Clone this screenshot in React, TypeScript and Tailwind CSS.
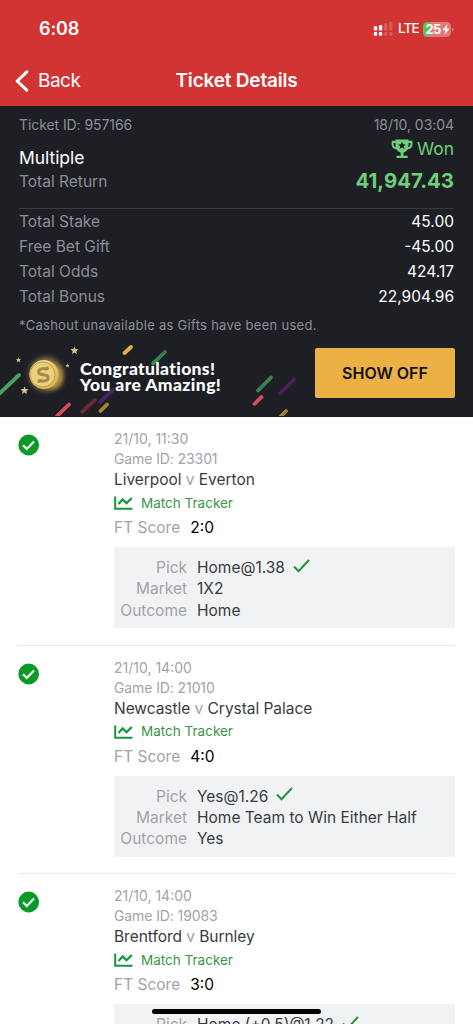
import React from "react";

type Match = {
  date: string;
  gameId: string;
  home: string;
  away: string;
  score: string;
  pick: string;
  market: string;
  outcome: string;
};

const totals = [
  ["Total Stake", "45.00"],
  ["Free Bet Gift", "-45.00"],
  ["Total Odds", "424.17"],
  ["Total Bonus", "22,904.96"],
];

const matches: Match[] = [
  { date: "21/10, 11:30", gameId: "23301", home: "Liverpool", away: "Everton", score: "2:0", pick: "Home@1.38", market: "1X2", outcome: "Home" },
  { date: "21/10, 14:00", gameId: "21010", home: "Newcastle", away: "Crystal Palace", score: "4:0", pick: "Yes@1.26", market: "Home Team to Win Either Half", outcome: "Yes" },
  { date: "21/10, 14:00", gameId: "19083", home: "Brentford", away: "Burnley", score: "3:0", pick: "Home (+0.5)@1.22", market: "", outcome: "" },
];

function StatusBar() {
  return (
    <div className="flex h-[58px] items-center justify-between pl-[39px] pr-[19px] text-white">
      <span className="text-[18px] font-semibold leading-none tracking-[-0.1px]">6:08</span>
      <div className="flex items-center">
        <svg width="20" height="14" viewBox="0 0 20 14" fill="#fff">
          <rect x="0.8" y="4.2" width="3.4" height="4.2" rx="1" />
          <rect x="5.9" y="3" width="3.4" height="5.4" rx="1" />
          <rect x="0.8" y="10" width="3.4" height="3.8" rx="1" />
          <rect x="5.9" y="10" width="3.4" height="3.8" rx="1" />
          <g opacity="0.18">
            <rect x="11" y="1.2" width="3.4" height="7.2" rx="1" />
            <rect x="16.1" y="0" width="3.4" height="8.4" rx="1" />
            <rect x="11" y="10" width="3.4" height="3.8" rx="1" />
            <rect x="16.1" y="10" width="3.4" height="3.8" rx="1" />
          </g>
        </svg>
        <span className="ml-[5px] w-[20px] text-[13.5px] font-medium leading-none tracking-[-0.8px]">LTE</span>
        <div className="ml-[5px] flex h-[15px] w-[28px] items-center overflow-hidden rounded-[4.5px] bg-[linear-gradient(90deg,#5cc45f_0_7px,#e07b7c_7px)] pl-[2.5px]">
          <span className="text-[13px] font-bold leading-none tracking-[-0.6px]">25</span>
          <svg className="ml-[1px]" width="8" height="11" viewBox="0 0 8 11" fill="#fff">
            <path d="M5.4 0.3 0.5 6.1h2.900L2.500 10.700l5-6H4.500z" />
          </svg>
        </div>
        <svg className="ml-[1px]" width="2" height="5" viewBox="0 0 2 5" fill="#e07b7c">
          <path d="M0 0.5Q2 1.5 2 2.5T0 4.5z" />
        </svg>
      </div>
    </div>
  );
}

function NavBar() {
  return (
    <div className="grid h-[48px] grid-cols-[1fr_auto_1fr] items-center pl-[15px] pb-[3px] text-white">
      <div className="flex items-center">
        <svg width="15" height="22" viewBox="0 0 15 22" fill="none" stroke="#fff" strokeWidth="3" strokeLinecap="round" strokeLinejoin="round">
          <path d="M11.8 1.8 2.2 11.1 11.8 20.2" />
        </svg>
        <span className="ml-[8px] text-[19px] leading-none tracking-[-0.5px]">Back</span>
      </div>
      <span className="mr-[15px] text-[19px] font-semibold leading-none tracking-[-0.2px]">Ticket Details</span>
      <span />
    </div>
  );
}

function Trophy() {
  return (
    <svg width="22" height="20" viewBox="0 0 22 20">
      <path fill="#6fce79" fillRule="evenodd" d="M4.500 .5h13v1.300h4v3.700c0 3-2 4.800-5 5-.9 1.500-2.200 2.600-4 3v3.300h4.200v2.200H5.500v-2.200h4.200v-3.300c-1.800-.4-3.100-1.500-4-3-3-.2-5-2-5-5V1.800h3.800zM2.600 3.900v1.600c0 1.500.8 2.400 2.200 2.700C4.500 7 4.500 5.400 4.500 3.900zm14.900 0c0 1.500 0 3.100-.3 4.300 1.400-.3 2.200-1.200 2.200-2.700V3.900z" />
      <path fill="#1e1f25" d="m11 2.700 1.150 2.450 2.700.3-2 1.800.55 2.650L11 8.600 8.600 9.900l.55-2.650-2-1.800 2.700-.3z" />
    </svg>
  );
}

function Confetti() {
  return (
    <svg className="absolute left-0 top-0" width="473" height="81" viewBox="0 0 473 81">
      <defs>
        <linearGradient id="coin" x1="0" y1="0" x2="0.8" y2="1">
          <stop offset="0" stopColor="#f6e49a" />
          <stop offset="1" stopColor="#d7b04d" />
        </linearGradient>
        <linearGradient id="leaf" x1="0" y1="1" x2="1" y2="0">
          <stop offset="0" stopColor="#2f9c50" />
          <stop offset="1" stopColor="#397748" />
        </linearGradient>
        <filter id="glow" x="-40%" y="-40%" width="180%" height="180%">
          <feGaussianBlur stdDeviation="2.5" />
        </filter>
      </defs>
      <g strokeWidth="3.800" strokeLinecap="round" fill="none">
        <path stroke="#46a35d" d="M-2 60 19 40" />
        <path stroke="#e3b23a" d="m124.500 18 6.500-6" />
        <path stroke="url(#leaf)" d="m153 28.500 12-11.500" />
        <path stroke="#dc4a5b" d="m57 81 12-11.500" />
        <path stroke="#672a36" d="m82 77 13-12" />
        <path stroke="#4d2163" d="m100 67 13-12" />
        <path stroke="#a78634" d="m100.500 76 6.500-6.500" />
        <path stroke="#39864d" d="m258 55.500 13-13" />
        <path stroke="#4a205b" d="m280 58.500 14-14" />
        <path stroke="#df4b5d" d="m254.500 69 7-7" />
        <path stroke="#9f8535" d="m281 81 5-5" />
      </g>
      <circle cx="46" cy="39" r="17" fill="#c6a24e" opacity="0.6" filter="url(#glow)" />
      <ellipse cx="53" cy="42" rx="10" ry="12" fill="#cda84d" opacity="0.7" filter="url(#glow)" />
      <circle cx="44" cy="39.500" r="14.500" fill="url(#coin)" />
      <circle cx="42.500" cy="39.500" r="12.500" fill="#ead07c" stroke="#b99445" strokeWidth="0.900" />
      <g transform="rotate(-8 43 40)">
        <path d="M47.500 35.500c-1.500-2.800-8.800-2.200-8.500 1.300.3 4 8.700 2.200 8.700 6.400 0 3.500-6.200 3.900-8.700 1.300" fill="none" stroke="#a9894a" strokeWidth="3" />
        <circle cx="48" cy="34" r="1.900" fill="#a9894a" />
        <circle cx="38.500" cy="45.500" r="1.900" fill="#a9894a" />
      </g>
      <g fill="#d9c18b">
        <path d="m74.500 11.500 1.100 2.600 2.900.2-2.200 1.900.7 2.800-2.500-1.500-2.500 1.500.7-2.800-2.200-1.900 2.900-.2z" />
        <path d="m24.500 51.500 1.100 2.600 2.900.2-2.200 1.900.7 2.800-2.500-1.500-2.500 1.500.7-2.800-2.200-1.900 2.900-.2z" />
        <path d="m18.500 22.500 .7 1.600 1.800.2-1.300 1.200.4 1.700-1.600-.9-1.600.9.400-1.700-1.300-1.200 1.800-.2z" />
        <path d="m67.500 28.500 .6 1.400 1.500.2-1.100 1 .3 1.500-1.300-.8-1.300.8.3-1.500-1.100-1 1.500-.2z" />
      </g>
    </svg>
  );
}

function Summary() {
  return (
    <section className="h-[311px] bg-[#1e1f25] pt-[9px] text-[#8c8e96]">
      <div className="mx-[19px] flex h-[94px] justify-between border-b border-[#3b3c42]">
        <div className="flex flex-col">
          <span className="h-[20px] text-[14px] leading-[20px] tracking-[-0.08px]">Ticket ID: 957166</span>
          <span className="mt-[11px] h-[24px] text-[17.5px] leading-[24px] tracking-[-0.05px] text-white">Multiple</span>
          <span className="text-[15.5px] leading-[24px]">Total Return</span>
        </div>
        <div className="flex flex-col items-end">
          <span className="h-[20px] text-[14px] leading-[20px] tracking-[-0.05px]">18/10, 03:04</span>
          <div className="mt-[2px] flex h-[24px] items-center gap-[4px] text-[17.4px] leading-[24px] text-[#6fce79]">
            <Trophy />
            <span>Won</span>
          </div>
          <span className="mt-[8px] text-[20.4px] font-bold leading-[24px] text-[#6fce79]">41,947.43</span>
        </div>
      </div>
      <div className="mx-[19px] flex flex-col text-[15.5px] leading-[25px]">
        {totals.map(([label, value]) => (
          <div key={label} className="flex justify-between">
            <span>{label}</span>
            <span className="text-white">{value}</span>
          </div>
        ))}
        <span className="mt-[6px] text-[13px] leading-[20px] tracking-[0.28px]">*Cashout unavailable as Gifts have been used.</span>
      </div>
      <div className="relative h-[81px] overflow-hidden">
        <Confetti />
        <div className="relative flex items-start justify-between pl-[80px] pr-[18px] pt-[13px]">
          <div className="mt-[13px] flex flex-col font-['Lato',sans-serif] text-[17.5px] font-black leading-[16px] text-white [font-variant-ligatures:none]">
            <span className="tracking-[0.35px]">Congratulations!</span>
            <span className="tracking-[0.4px]">You are Amazing!</span>
          </div>
          <button className="h-[50px] w-[140px] rounded-[2px] bg-[#edb044] text-[16px] font-semibold text-[#111]">SHOW OFF</button>
        </div>
      </div>
    </section>
  );
}

function Detail({ label, value, checked }: { label: string; value: string; checked?: boolean }) {
  return (
    <div className="flex h-[21.25px] items-center whitespace-nowrap text-[15.5px]">
      <span className="w-[73px] text-right text-[#a1a3aa]">{label}</span>
      <span className="ml-[10px] text-[#393b43]">{value}</span>
      {checked && (
        <svg className="mb-[4px] ml-[8px]" width="17" height="14" viewBox="0 0 17 14" fill="none" stroke="#20953c" strokeWidth="2">
          <path d="m1 7.500 4.500 4.700L16 1" />
        </svg>
      )}
    </div>
  );
}

function MatchCard({ match }: { match: Match }) {
  return (
    <article className="mx-[18px] flex h-[228.5px] shrink-0 border-b border-[#e7e8ea] pt-[12px]">
      <svg className="mt-[5px] shrink-0" width="22" height="22" viewBox="0 0 22 22">
        <circle cx="10.700" cy="11" r="10.400" fill="#0b9a28" />
        <path d="m5 11.200 3.800 3.800 7.200-7.400" fill="none" stroke="#fff" strokeWidth="2.200" />
      </svg>
      <div className="ml-[74px] flex w-[341px] flex-col">
        <span className="h-[20px] text-[14px] leading-[20px] text-[#a1a3aa]">{match.date}</span>
        <span className="h-[20px] text-[14px] leading-[20px] tracking-[-0.1px] text-[#a1a3aa]">Game ID: {match.gameId}</span>
        <span className="h-[20px] text-[15.5px] leading-[22px] tracking-[-0.04px] text-[#393b43]">
          {match.home} <span className="text-[#a1a3aa]">v</span> {match.away}
        </span>
        <div className="mt-[3px] flex h-[22px] items-center text-[13.5px] text-[#3a9549]">
          <svg width="19" height="14" viewBox="0 0 19 14" fill="none" stroke="#159541" strokeWidth="2">
            <path d="M1.200 0.500v12.200H18.500" />
            <path d="m4.500 8 4.200-4.600 3.800 3.900 5.300-5.300" strokeWidth="2.200" />
          </svg>
          <span className="ml-[8px]">Match Tracker</span>
        </div>
        <div className="mt-[3px] flex h-[22px] items-center text-[15.5px]">
          <span className="text-[#a1a3aa]">FT Score</span>
          <span className="ml-[10px] text-black">{match.score}</span>
        </div>
        <div className="mt-[8px] flex h-[81px] flex-col bg-[#f1f2f4] pt-[10px]">
          <Detail label="Pick" value={match.pick} checked />
          {match.market && <Detail label="Market" value={match.market} />}
          {match.outcome && <Detail label="Outcome" value={match.outcome} />}
        </div>
      </div>
    </article>
  );
}

export default function App() {
  return (
    <main className="relative h-[1024px] w-[473px] overflow-hidden bg-white font-['Inter',sans-serif]">
      <header className="h-[106px] bg-[#d13433]">
        <StatusBar />
        <NavBar />
      </header>
      <Summary />
      <div className="flex flex-col">
        {matches.map((match) => (
          <MatchCard key={match.gameId} match={match} />
        ))}
      </div>
      <div className="absolute bottom-[10px] left-[152px] h-[5px] w-[169px] rounded-full bg-black" />
    </main>
  );
}
